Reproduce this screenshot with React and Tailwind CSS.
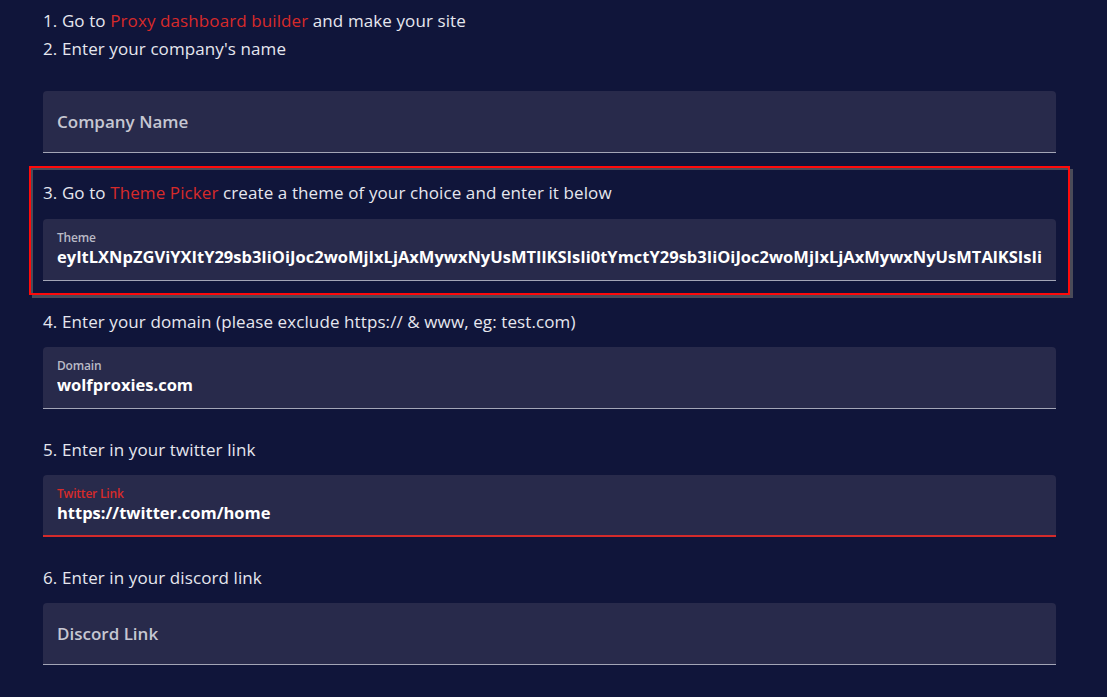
import React from 'react';

const THEME =
  'eyItLXNpZGViYXItY29sb3IiOiJoc2woMjIxLjAxMywxNyUsMTIlKSIsIi0tYmctY29sb3IiOiJoc2woMjIxLjAxMywxNyUsMTAlKSIsIi';

const Step = ({ children }) => (
  <p className="text-[17px] leading-[28px] tracking-[0.1px] text-[#e6e7ef]">{children}</p>
);

const Link = ({ children }) => <span className="text-[#d72a2a]">{children}</span>;

const Field = ({ label, value, active = false }) => {
  if (!value) {
    return (
      <div className="h-[62px] w-full rounded-t-[4px] bg-[#282a4b] border-b border-[#a3a5b6] flex items-center px-[14px]">
        <span className="text-[17px] font-semibold text-[#c6c7d2]">{label}</span>
      </div>
    );
  }
  return (
    <div
      className={`h-[62px] w-full rounded-t-[4px] bg-[#282a4b] flex flex-col justify-center px-[14px] ${
        active ? 'border-b-2 border-[#d42b2b]' : 'border-b border-[#a3a5b6]'
      }`}
    >
      <span
        className={`text-[12px] leading-[15px] font-semibold tracking-[-0.2px] ${
          active ? 'text-[#d72a2a]' : 'text-[#b9bac6]'
        }`}
      >
        {label}
      </span>
      <span className="text-[16.5px] leading-[24px] font-bold text-white whitespace-nowrap overflow-hidden">
        {value}
      </span>
    </div>
  );
};

export default function App() {
  return (
    <div
      className="min-h-[697px] w-full bg-[#10153a] pl-[43px] pt-[7px] pb-[32px]"
      style={{ fontFamily: '"Open Sans", Lato, sans-serif' }}
    >
      <div className="w-[1013px]">
        <Step>
          1. Go to <Link>Proxy dashboard builder</Link> and make your site
        </Step>
        <Step>2. Enter your company's name</Step>
        <div className="mt-[28px]">
          <Field label="Company Name" />
        </div>

        <div className="-ml-[14px] mt-[13px] w-[1041px] border-2 border-[#ff0a0a] px-[12px] pt-[11px] pb-[12px] shadow-[3px_3px_0_0_#4a4b58,inset_2px_2px_0_0_#4a4b58]">
          <Step>
            3. Go to <Link>Theme Picker</Link> create a theme of your choice and enter it below
          </Step>
          <div className="mt-[12px]">
            <Field label="Theme" value={THEME} />
          </div>
        </div>

        <div className="mt-[13px]">
          <Step>4. Enter your domain (please exclude https:// &amp; www, eg: test.com)</Step>
        </div>
        <div className="mt-[11px]">
          <Field label="Domain" value="wolfproxies.com" />
        </div>

        <div className="mt-[27px]">
          <Step>5. Enter in your twitter link</Step>
        </div>
        <div className="mt-[11px]">
          <Field label="Twitter Link" value="https://twitter.com/home" active />
        </div>

        <div className="mt-[27px]">
          <Step>6. Enter in your discord link</Step>
        </div>
        <div className="mt-[11px]">
          <Field label="Discord Link" />
        </div>
      </div>
    </div>
  );
}
